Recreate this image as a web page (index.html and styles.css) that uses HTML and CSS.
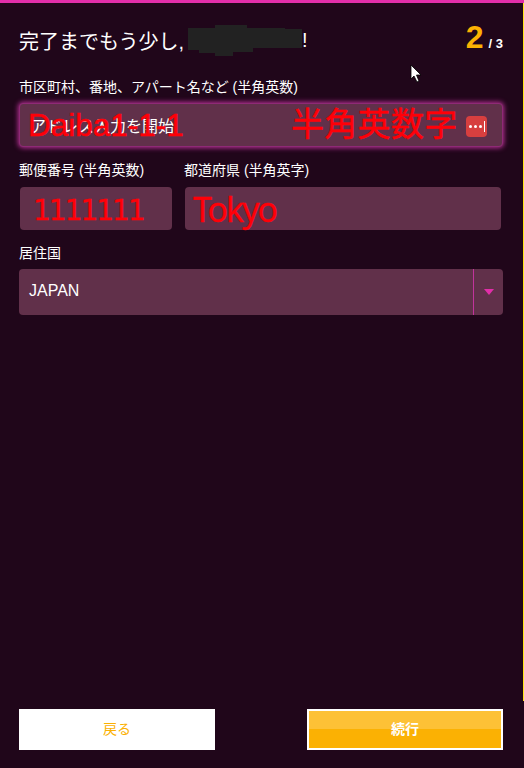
FILE: index.html
```html
<!DOCTYPE html>
<html lang="ja">
<head>
    <meta charset="UTF-8">
    <title>住所入力</title>
    <link rel="stylesheet" href="styles.css">
</head>
<body>
    <div class="page">
        <div class="header">
            <h1 class="title">完了までもう少し,<span class="redacted"><svg width="117" height="32" viewBox="0 0 117 32"><path d="M3 4H30V1H62V4H100V5H117V24H68V28H48V32H30V29H14V26H3Z" fill="#222222"/></svg></span>!</h1>
            <div class="steps"><span class="step-now">2</span><span class="step-total">/ 3</span></div>
        </div>

        <form class="form">
            <div class="field">
                <label class="label">市区町村、番地、アパート名など (半角英数)</label>
                <div class="input input-focus">
                    <span class="input-text">アドレス入力を開始</span>
                    <span class="note note-address">Daiba1-1-1</span>
                    <span class="note note-halfwidth">半角英数字</span>
                    <span class="dots"><i></i><i></i><i></i><b></b></span>
                </div>
            </div>
            <div class="row">
                <div class="field field-zip">
                    <label class="label">郵便番号 (半角英数)</label>
                    <div class="input input-small note-zip">1111111</div>
                </div>
                <div class="field field-pref">
                    <label class="label">都道府県 (半角英字)</label>
                    <div class="input input-small note-pref">Tokyo</div>
                </div>
            </div>
            <div class="field">
                <label class="label">居住国</label>
                <div class="select">
                    <span class="select-value">JAPAN</span>
                    <span class="select-arrow"><i class="caret"></i></span>
                </div>
            </div>
        </form>

        <div class="actions">
            <button type="button" class="button button-back">戻る</button>
            <button type="button" class="button button-next">続行</button>
        </div>
    </div>
    <svg class="cursor" width="12" height="19" viewBox="0 0 12 19"><path d="M1 1V15L4 12L7 18L9 17L6.500 11H11Z" fill="#fff" stroke="#000" stroke-width="0.8"/></svg>
</body>
</html>
```

FILE: styles.css
```css
* { box-sizing: border-box; }
body { margin: 0; background-color: #20061a; color: #fff; font-family: "Liberation Sans", "Noto Sans CJK JP", sans-serif; }
.page { position: relative; display: flex; flex-direction: column; height: 768px; padding: 0 21px 18px 19px; border-top: 3px solid #e22ea9; }
.page::after { content: ""; position: absolute; top: 0; right: 0; width: 1px; height: 698px; background-color: #ffe81a; }
.header { display: flex; justify-content: space-between; align-items: center; height: 46px; margin-top: 14px; }
.title { margin: 0; font-size: 20px; font-weight: normal; display: flex; align-items: center; }
.redacted { display: block; height: 32px; margin-left: 1px; }
.steps { display: flex; align-items: baseline; gap: 5px; margin-top: -5px; }
.step-now { color: #fbb103; font-size: 32px; font-weight: bold; }
.step-total { font-size: 13px; font-weight: bold; }

.form { display: flex; flex-direction: column; gap: 13px; margin-top: 14px; }
.label { display: block; height: 20px; line-height: 20px; font-size: 14px; margin-bottom: 6px; }
.row .label { margin-bottom: 7px; }
.row { display: flex; gap: 12px; }
.field-zip { width: 153px; }
.field-pref { flex: 1; }

.input { position: relative; display: flex; align-items: center; height: 44px; padding: 0 10px; background-color: #61304a; border-radius: 4px; font-size: 16px; }
.input-focus { border: 1px solid #8e2a76; box-shadow: 0 0 5px 1px #b62f93; }
.input-small { height: 43px; margin: 0 2px 0 1px; }
.field-zip .input-small { margin-right: 0; }
.input-text { white-space: nowrap; }
.note { position: absolute; color: #ff0008; white-space: nowrap; -webkit-text-stroke: 0.5px #ff0008; }
.note-address { left: 8px; top: 0; font-size: 31.5px; line-height: 42px; }
.note-halfwidth { left: 271px; top: 0; font-size: 33px; line-height: 42px; letter-spacing: 0.3px; }
.note-zip, .note-pref { color: #ff0008; -webkit-text-stroke: 0.3px #ff0008; }
.note-zip { font-family: "DejaVu Sans", sans-serif; font-size: 28px; padding-left: 13px; padding-top: 4px; letter-spacing: -2px; }
.note-pref { font-family: "Noto Sans", sans-serif; font-size: 34px; padding-left: 8px; letter-spacing: -2px; }
.dots { position: absolute; right: 15px; top: 12px; display: flex; align-items: center; gap: 2px; width: 21px; height: 21px; padding-left: 3px; background-color: #d73f3f; border-radius: 4px; }
.dots i { width: 3px; height: 3px; background-color: #fff; border-radius: 50%; }
.dots b { width: 1px; height: 11px; background-color: #fff; }

.select { display: flex; align-items: center; height: 46px; background-color: #61304a; border-radius: 4px; font-size: 16px; }
.select-value { flex: 1; padding: 0 0 2px 10px; }
.select-arrow { display: flex; align-items: center; justify-content: center; width: 30px; height: 100%; border-left: 1px solid #c2339c; }
.caret { width: 0; height: 0; border-left: 5px solid transparent; border-right: 5px solid transparent; border-top: 6px solid #e22ea9; }

.actions { display: flex; justify-content: space-between; margin-top: auto; }
.button { width: 196px; height: 41px; padding: 0 0 3px; border: 0; font-family: inherit; font-size: 14px; font-weight: bold; cursor: pointer; }
.button-back { background-color: #fff; color: #fbb103; font-weight: normal; }
.button-next { border: 2px solid #fff; color: #fff; background: linear-gradient(#fdc136 50%, #fbb103 50%); }

.cursor { position: absolute; left: 410px; top: 64px; }
```
